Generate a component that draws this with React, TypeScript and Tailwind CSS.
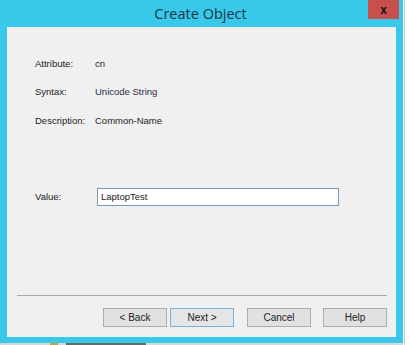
const rows = [
  { label: "Attribute:", value: "cn" },
  { label: "Syntax:", value: "Unicode String" },
  { label: "Description:", value: "Common-Name" },
];

const DialogButton = ({
  label,
  primary,
}: {
  label: string;
  primary?: boolean;
}) => (
  <button
    className={
      primary
        ? "w-[64px] h-[19px] border border-[#7ab0dc] bg-[#e5e5e5] text-[10px] text-[#222]"
        : "w-[64px] h-[19px] border border-[#acacac] bg-[#e1e1e1] text-[10px] text-[#222]"
    }
  >
    {label}
  </button>
);

export default function App() {
  return (
    <div
      className="w-[410px] h-[345px] bg-white flex overflow-hidden"
      style={{ fontFamily: '"Segoe UI", "Liberation Sans", Arial, sans-serif' }}
    >
      <div className="flex flex-col">
        {/* Window */}
        <div className="w-[403px] h-[343px] bg-[#38c8ea] flex flex-col">
          {/* Title bar */}
          <div className="h-[27px] flex items-start">
            <div
              className="flex-1 h-[27px] flex items-center justify-center pl-[33px] text-[14.5px] text-[#1c3646]"
              style={{ fontFamily: '"Open Sans", sans-serif' }}
            >
              Create Object
            </div>
            <div className="w-[31px] h-[19px] bg-[#c8504c] flex items-center justify-center mr-[4px] text-[12px] font-bold leading-none text-[#151515]">
              x
            </div>
          </div>

          {/* Client area */}
          <div className="mx-[7px] mb-[6px] flex-1 bg-[#f0f0f0] flex flex-col text-[9.5px] text-[#222]">
            <div className="pt-[30px] pl-[28px] flex flex-col gap-[14.5px]">
              {rows.map((r) => (
                <div key={r.label} className="flex items-center h-[14px]">
                  <span className="w-[60px]">{r.label}</span>
                  <span className={r.value === "Unicode String" ? "text-[#2a2a4a]" : ""}>
                    {r.value}
                  </span>
                </div>
              ))}
            </div>

            <div className="mt-[60px] pl-[28px] flex items-center">
              <span className="w-[62px]">Value:</span>
              <div className="w-[242px] h-[18px] border border-[#7b9ab5] bg-white flex items-center px-[3px]">
                LaptopTest
              </div>
            </div>

            <div className="mt-auto">
              <div className="mx-[10px] h-px bg-[#a8a8a8] mr-[9px]" />
              <div className="flex justify-end pr-[9px] pt-[12px] pb-[10px]">
                <DialogButton label="< Back" />
                <div className="w-[3px]" />
                <DialogButton label="Next >" primary />
                <div className="w-[13px]" />
                <DialogButton label="Cancel" />
                <div className="w-[12px]" />
                <DialogButton label="Help" />
              </div>
            </div>
          </div>
        </div>
        {/* Desktop behind */}
        <div className="h-[2px] bg-[#d8d8d8] flex">
          <div className="ml-[50px] w-[8px] bg-[#c8a23c]" />
          <div className="ml-[8px] w-[80px] bg-[#6a6a6a]" />
        </div>
      </div>
      <div className="flex-1 border-l border-[#d0d0d0] ml-[1px]" />
    </div>
  );
}
